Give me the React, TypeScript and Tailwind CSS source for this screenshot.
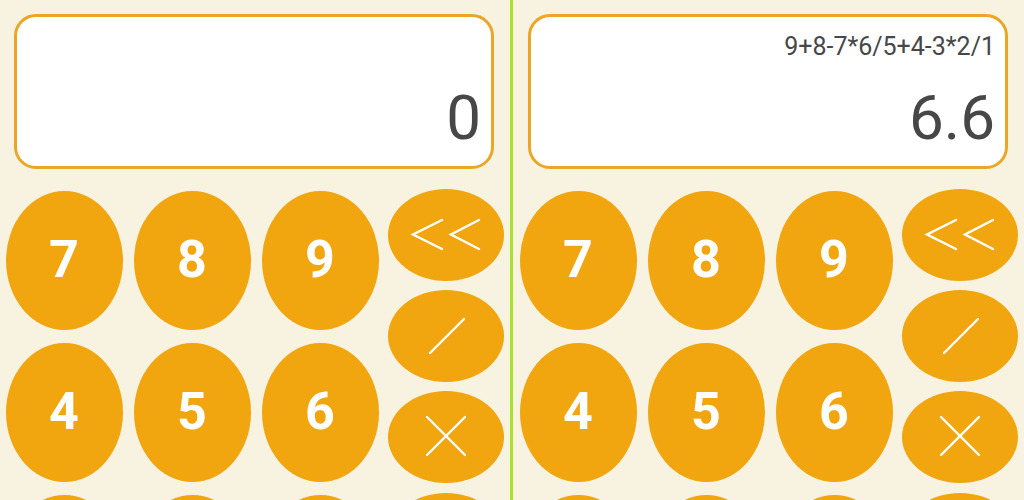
import React from "react";

const ORANGE = "bg-[#f1a50f]";

function NumKey({ label }: { label: string }) {
  return (
    <div className="flex h-[152px] w-[128px] items-center justify-center">
      <div
        className={`flex h-[139px] w-[117px] items-center justify-center rounded-[50%] ${ORANGE} text-[52px] font-bold leading-none text-white`}
      >
        {label}
      </div>
    </div>
  );
}

function OpKey({ children }: { children?: React.ReactNode }) {
  return (
    <div className="flex h-[101.33px] w-[124px] shrink-0 items-center justify-center">
      <div className={`h-[92px] w-[116px] rounded-[50%] ${ORANGE}`}>
        <svg width="116" height="92" viewBox="0 0 116 92" fill="none" stroke="white" strokeWidth="2.4" strokeLinecap="round" strokeLinejoin="miter">
          {children}
        </svg>
      </div>
    </div>
  );
}

function Half({ expr, value }: { expr: string; value: string }) {
  return (
    <div className="flex h-[500px] w-[510px] shrink-0 flex-col overflow-hidden">
      <div className="mx-[14px] mt-[14px] flex h-[155px] w-[480px] shrink-0 flex-col items-end rounded-[22px] border-[3px] border-[#eba626] bg-white pr-[10px] text-[#474747]">
        <div className="h-[44px] shrink-0 pt-[16px] text-[25px] leading-[28px]">{expr}</div>
        <div className="mt-auto pb-[17px] text-[62px] leading-[62px]">{value}</div>
      </div>
      <div className="mt-[15px] flex shrink-0">
        <div className="grid w-[384px] shrink-0 grid-cols-3">
          {["7", "8", "9", "4", "5", "6", "", "", ""].map((k, i) => (
            <NumKey key={i} label={k} />
          ))}
        </div>
        <div className="flex flex-col">
          <OpKey>
            <polyline points="54,31 25,45.5 54,60" />
            <polyline points="91,31 63,45.5 91,60" />
          </OpKey>
          <OpKey>
            <line x1="42" y1="63" x2="76" y2="29" />
          </OpKey>
          <OpKey>
            <line x1="39" y1="26" x2="77" y2="64" />
            <line x1="77" y1="26" x2="39" y2="64" />
          </OpKey>
          <OpKey />
        </div>
      </div>
    </div>
  );
}

export default function App() {
  return (
    <div
      className="flex h-[500px] w-[1024px] overflow-hidden bg-[#f8f2e0]"
      style={{ fontFamily: "Roboto, 'Noto Sans', sans-serif" }}
    >
      <Half expr="" value="0" />
      <div className="h-[500px] w-[3px] shrink-0 bg-[#a8e22b]" />
      <div className="pl-[1px]">
        <Half expr="9+8-7*6/5+4-3*2/1" value="6.6" />
      </div>
    </div>
  );
}
